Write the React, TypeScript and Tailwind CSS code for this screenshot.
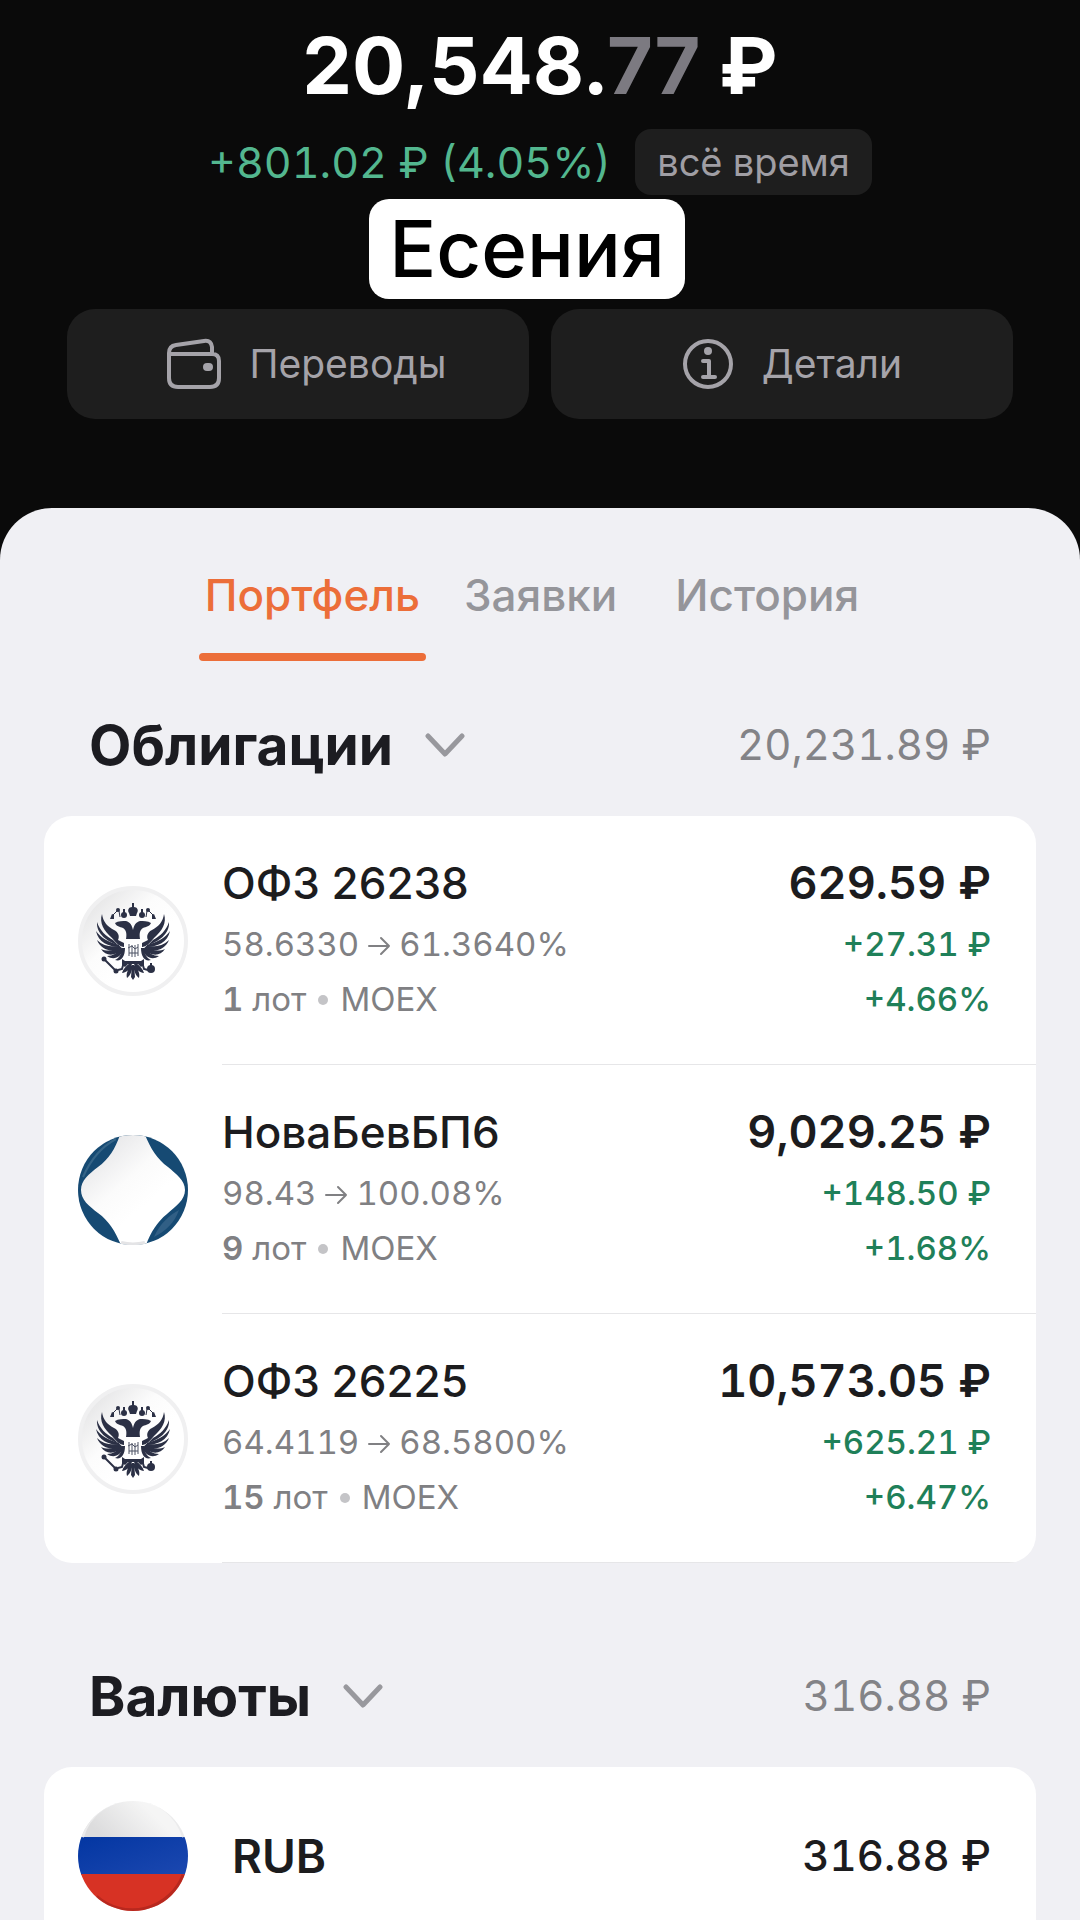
import type { ReactNode } from 'react';

type Position = {
  name: string;
  from: string;
  to: string;
  lots: string;
  total: string;
  gain: string;
  percent: string;
  logo: ReactNode;
};

function EagleHalf() {
  return (
    <g fill="#2b3045">
      {/* head and neck */}
      <path d="M55 44 C54 39 52 36 48 35 C45 35 40 35 37 37 C38 40 42 41 45 42 C48 44 49 47 48 53 H55 Z" />
      {/* feathers */}
      <path d="M24 28 C25 36 30 41 36 44 C40 46 42 50 40 54 L46 57 L46 61 C42 61 38 57 34 52 C26 45 21 37 24 28 Z" />
      <path d="M19 36 C22 45 28 50 35 54 L40 59 C30 56 18 48 19 36 Z" />
      <path d="M18 45 C23 52 30 56 41 59 L41 61 C31 61 20 56 18 45 Z" />
      <path d="M19 54 C25 60 32 61 42 60 L43 62 C34 67 23 64 19 54 Z" />
      <path d="M23 63 C30 66 36 64 43 61 L44 63 C38 70 28 71 23 63 Z" />
      <path d="M29 70 C35 70 39 67 43 62 L46 63 C43 71 36 75 29 70 Z" />
      <path d="M37 74 C41 72 44 68 44 62 L47 62 C47 71 43 76 37 74 Z" />
      {/* small crown and ribbon */}
      <circle cx="46" cy="29" r="3" />
      <path d="M45 23 H47 V27 H45 Z M32 33 L34 28 L36 29 L36 33 Z" />
      <circle cx="40" cy="24" r="2" />
      <path d="M40 24 L34 30 M41 25 L42 31" fill="none" stroke="#2b3045" strokeWidth="1" />
      {/* leg and tail */}
      <path d="M44 73 L47 75 H55 V78 H50 L47 81 L44 79 Z" />
      <path d="M46 76 L44 83 L40 84" fill="none" stroke="#2b3045" strokeWidth="2" />
      <path d="M52 77 C48 80 45 83 44 87 C48 87 52 83 54 78 Z M54 79 C49 84 48 88 49 92 C53 89 54 84 55 79 Z" />
    </g>
  );
}

function EagleLogo() {
  return (
    <svg viewBox="0 0 110 110" className="size-[110px]" aria-hidden="true">
      <defs>
        <linearGradient id="coin" x1="0.1" y1="0.1" x2="0.6" y2="0.6">
          <stop offset="0" stopColor="#e4e4e5" />
          <stop offset="0.6" stopColor="#fcfcfc" />
          <stop offset="1" stopColor="#ffffff" />
        </linearGradient>
      </defs>
      <circle cx="55" cy="55" r="53" fill="url(#coin)" stroke="#f0f0f1" strokeWidth="4" />
      <EagleHalf />
      <g transform="translate(110 0) scale(-1 1)">
        <EagleHalf />
      </g>
      <g fill="#2b3045">
        <path d="M54 17 H56 V21 C59 21 61 24 59 27 L58 30 H52 L51 27 C49 24 51 21 54 21 Z M54 79 H56 L57 91 L55 94 L53 91 Z" />
        <circle cx="26" cy="73" r="2.5" />
        <circle cx="38" cy="85" r="2.5" />
        <path d="M26 73 L38 85" stroke="#2b3045" strokeWidth="2" />
        <circle cx="73" cy="83" r="4" />
        <path d="M72 77 H74 V81 H72 Z" />
      </g>
      <path d="M49 57 H61 V69 C60 72 57 71 55 73 C53 71 50 72 49 69 Z" fill="#ffffff" />
      <path d="M51 58 V70 M54 59 V71 M57 59 V71 M60 58 V70 M50 62 L54 60 L57 63 L60 61 M51 67 H60" fill="none" stroke="#4d5264" strokeWidth="1" />
    </svg>
  );
}

function NovaLogo() {
  return (
    <svg viewBox="0 0 110 110" className="size-[110px]" aria-hidden="true">
      <defs>
        <clipPath id="nova-clip">
          <circle cx="55" cy="55" r="55" />
        </clipPath>
        <linearGradient id="nova-face" x1="0.15" y1="0.1" x2="0.6" y2="0.65">
          <stop offset="0" stopColor="#e6e6e8" />
          <stop offset="0.6" stopColor="#fbfbfb" />
          <stop offset="1" stopColor="#ffffff" />
        </linearGradient>
      </defs>
      <g clipPath="url(#nova-clip)">
        <rect width="110" height="110" fill="#164a73" />
        <path d="M42 0 C37 14 31 24 20 32 C11 39 3 45 3 55 C3 65 11 71 20 78 C31 86 37 96 43 110 H68 C73 97 79 87 89 79 C98 71 107 65 107 55 C107 45 98 39 90 32 C79 24 73 14 67 0 Z" fill="url(#nova-face)" />
        <path d="M43 108 Q55 111 67 108" fill="none" stroke="#e4e4e6" strokeWidth="4" />
        <path d="M5 42 C12 26 23 12 38 4" fill="none" stroke="#356487" strokeWidth="2" />
        <path d="M76 102 C82 88 92 80 101 75 C97 87 88 96 76 102 Z" fill="#315f85" />
      </g>
    </svg>
  );
}

function FlagLogo() {
  return (
    <svg viewBox="0 0 110 110" className="size-[110px]" aria-hidden="true">
      <defs>
        <clipPath id="flag-clip">
          <circle cx="55" cy="55" r="55" />
        </clipPath>
        <linearGradient id="flag-white" x1="0.1" y1="0.6" x2="0.7" y2="0.4">
          <stop offset="0" stopColor="#dcdcdd" />
          <stop offset="1" stopColor="#f5f5f5" />
        </linearGradient>
        <linearGradient id="flag-blue" x1="0" y1="0" x2="1" y2="1">
          <stop offset="0" stopColor="#0336a2" />
          <stop offset="1" stopColor="#1c48b0" />
        </linearGradient>
      </defs>
      <g clipPath="url(#flag-clip)">
        <rect width="110" height="37" fill="url(#flag-white)" />
        <rect y="36" width="110" height="38" fill="url(#flag-blue)" />
        <rect y="73" width="110" height="37" fill="#d73224" />
        <path d="M4 36 A53 53 0 0 1 106 36" fill="none" stroke="#ebebec" strokeWidth="4" />
        <path d="M18 96 A55 55 0 0 0 106 74" fill="none" stroke="#a3211b" strokeOpacity="0.6" strokeWidth="5" />
      </g>
    </svg>
  );
}

function WalletIcon() {
  return (
    <svg viewBox="0 0 56 52" className="h-[52px] w-[56px]" fill="none" stroke="currentColor" strokeWidth="4" strokeLinejoin="round" aria-hidden="true">
      <path d="M3 16 H46 Q53 16 53 23 V40 Q53 49 44 49 H12 Q3 49 3 40 V15 Q3 8 10 7 L38 3 Q45 2 46 9 V16" />
      <rect x="37" y="25" width="10" height="8" rx="4" fill="currentColor" stroke="none" />
    </svg>
  );
}

function InfoIcon() {
  return (
    <svg viewBox="0 0 52 52" className="size-[52px]" fill="none" stroke="currentColor" strokeWidth="4" strokeLinecap="round" strokeLinejoin="round" aria-hidden="true">
      <circle cx="26" cy="26" r="23" />
      <path d="M21 23 H27 V39 M21 39 H33" />
      <circle cx="26" cy="13" r="4" fill="currentColor" stroke="none" />
    </svg>
  );
}

function Chevron() {
  return (
    <svg viewBox="0 0 40 24" className="h-6 w-10 text-[#98989d]" fill="none" stroke="currentColor" strokeWidth="5" strokeLinecap="round" strokeLinejoin="round" aria-hidden="true">
      <path d="M3 3 L20 21 L37 3" />
    </svg>
  );
}

function Arrow() {
  return (
    <svg viewBox="0 0 24 24" className="size-6" fill="none" stroke="currentColor" strokeWidth="2" strokeLinecap="round" strokeLinejoin="round" aria-hidden="true">
      <path d="M2 13 H22 M14 5 L22 13 L14 21" />
    </svg>
  );
}

function SectionHeader({ title, total }: { title: string; total: string }) {
  return (
    <div className="flex items-center justify-between px-[89px]">
      <button type="button" className="flex items-center gap-8">
        <h2 className="text-[55px] leading-[64px] font-bold text-[#1c1c21]">{title}</h2>
        <Chevron />
      </button>
      <span className="text-[42px] leading-[64px] text-[#838387]">{total}</span>
    </div>
  );
}

function PositionRow({ item }: { item: Position }) {
  return (
    <li className="flex pl-[34px]">
      <div className="flex items-center pr-[34px]">{item.logo}</div>
      <div className="flex flex-1 justify-between border-b border-[#e6e6e8] pt-[39px] pr-[45px] pb-[37px]">
        <div>
          <h3 className="mb-[6px] text-[44px] leading-[56px] font-medium text-[#1c1c1e] proportional-nums">{item.name}</h3>
          <p className="flex items-center gap-2 text-[33px] leading-[55px] text-[#808083]">
            {item.from}
            <Arrow />
            {item.to}
          </p>
          <p className="flex items-center gap-3 text-[33px] leading-[55px] text-[#808083]">
            <span>
              <b className="font-semibold">{item.lots}</b> лот
            </span>
            <span className="size-[10px] rounded-full bg-[#c4c4c7]" />
            MOEX
          </p>
        </div>
        <div className="text-right">
          <p className="mb-[6px] text-[45px] leading-[56px] font-semibold text-[#1c1c1e]">{item.total}</p>
          <p className="text-[33px] leading-[55px] font-medium text-[#1f8059]">{item.gain}</p>
          <p className="text-[33px] leading-[55px] font-medium text-[#1f8059]">{item.percent}</p>
        </div>
      </div>
    </li>
  );
}

const bonds: Position[] = [
  { name: 'ОФЗ 26238', from: '58.6330', to: '61.3640%', lots: '1', total: '629.59 ₽', gain: '+27.31 ₽', percent: '+4.66%', logo: <EagleLogo /> },
  { name: 'НоваБевБП6', from: '98.43', to: '100.08%', lots: '9', total: '9,029.25 ₽', gain: '+148.50 ₽', percent: '+1.68%', logo: <NovaLogo /> },
  { name: 'ОФЗ 26225', from: '64.4119', to: '68.5800%', lots: '15', total: '10,573.05 ₽', gain: '+625.21 ₽', percent: '+6.47%', logo: <EagleLogo /> },
];

export default function App() {
  return (
    <main className="flex min-h-screen flex-col bg-[#0a0a0a] font-['Inter','Noto_Sans',sans-serif] tabular-nums">
      <header className="px-[67px] pt-4 pb-[89px]">
        <h1 className="text-center text-[79px] leading-[98px] font-bold text-white proportional-nums">
          20,548.<span className="text-[#7c7a81]">77</span> ₽
        </h1>
        <div className="mt-[15px] flex items-center justify-center gap-6">
          <span className="text-[43px] leading-[66px] text-[#53b78f]">+801.02 ₽ (4.05%)</span>
          <button type="button" className="rounded-2xl bg-[#1e1e1e] px-[22px] text-[38px] leading-[66px] text-[#a09ea4]">
            всё время
          </button>
        </div>
        <div className="mt-1 flex justify-center pr-[26px]">
          <span className="rounded-[20px] bg-white px-5 text-[78px] leading-[100px] font-medium text-black">Есения</span>
        </div>
        <div className="mt-[10px] grid grid-cols-2 gap-[22px] text-[39px] leading-[110px] text-[#a5a3a9]">
          <button type="button" className="flex items-center justify-center gap-7 rounded-[28px] bg-[#1e1e1e] pl-4">
            <WalletIcon />
            Переводы
          </button>
          <button type="button" className="flex items-center justify-center gap-7 rounded-[28px] bg-[#1e1e1e] pl-5">
            <InfoIcon />
            Детали
          </button>
        </div>
      </header>

      <div className="flex flex-1 flex-col rounded-t-[52px] bg-[#f0f0f4]">
        <nav className="flex items-start justify-center gap-[38px] pt-[57px] pr-[22px] text-[44px] leading-[60px] font-medium text-[#95959a]">
          <button type="button" className="text-[#ec6e39]">
            <span className="block px-[6px] pb-7">Портфель</span>
            <span className="block h-2 rounded-full bg-[#ec6e39]" />
          </button>
          <button type="button">Заявки</button>
          <button type="button" className="pl-5">История</button>
        </nav>

        <section className="mt-[52px]">
          <SectionHeader title="Облигации" total="20,231.89 ₽" />
          <ul className="mx-11 mt-[39px] overflow-hidden rounded-[28px] bg-white">
            {bonds.map((item) => (
              <PositionRow key={item.name} item={item} />
            ))}
          </ul>
        </section>

        <section className="mt-[101px] flex flex-1 flex-col">
          <SectionHeader title="Валюты" total="316.88 ₽" />
          <ul className="mx-11 mt-[39px] flex-1 rounded-t-[28px] bg-white">
            <li className="flex items-center pt-[34px] pr-[45px] pb-2 pl-[34px]">
              <FlagLogo />
              <span className="flex-1 pl-11 text-[46px] leading-[56px] font-semibold text-[#1c1c1e]">RUB</span>
              <span className="text-[42px] leading-[56px] font-medium text-[#1c1c1e]">316.88 ₽</span>
            </li>
          </ul>
        </section>
      </div>
    </main>
  );
}
